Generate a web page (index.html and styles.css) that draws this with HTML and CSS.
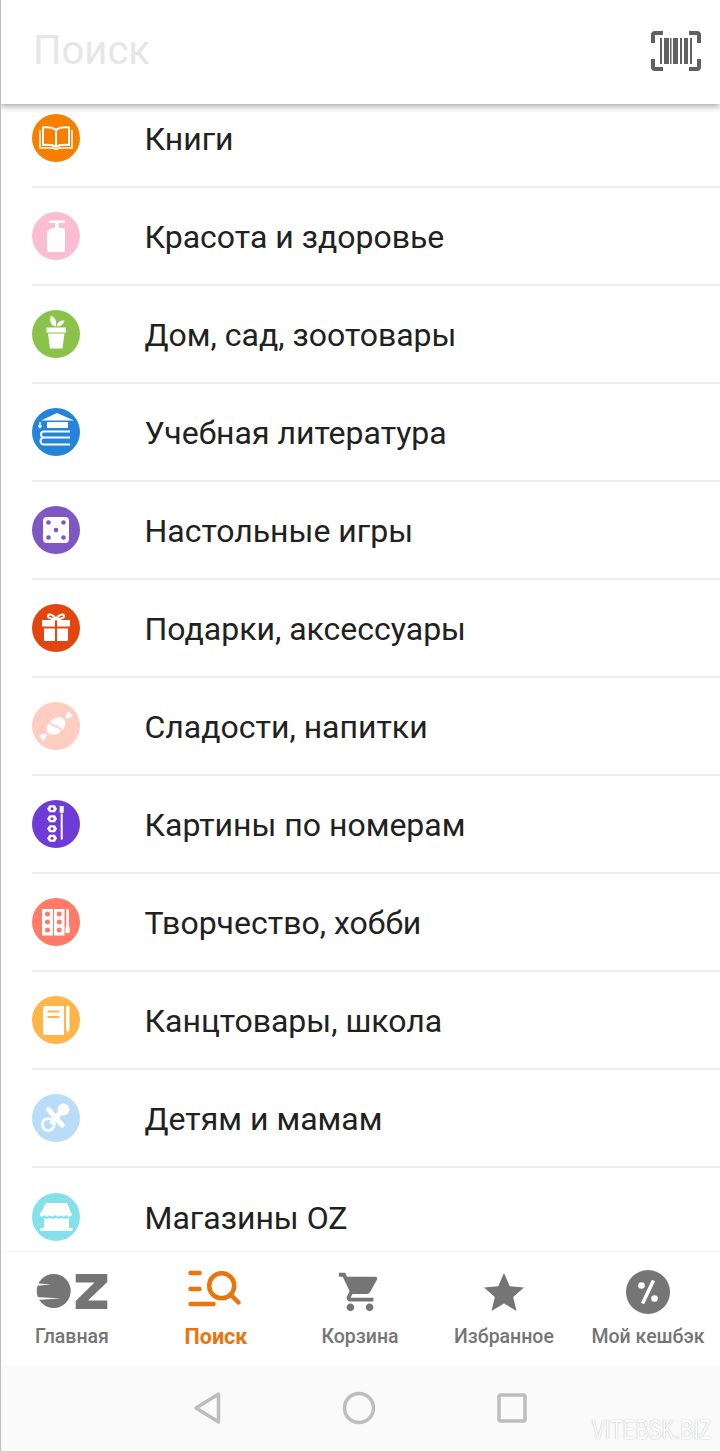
FILE: index.html
```html
<!DOCTYPE html>
<html lang="ru">
<head>
<meta charset="utf-8">
<title>Поиск</title>
<link rel="stylesheet" href="styles.css">
</head>
<body>
<div class="page">
  <header class="search">
    <span class="placeholder">Поиск</span>
    <svg class="barcode" viewBox="0 0 50 40" width="50" height="40">
      <path class="corner" d="M12 2H4a2 2 0 0 0-2 2v8M38 2h8a2 2 0 0 1 2 2v8M12 38H4a2 2 0 0 1-2-2v-8M38 38h8a2 2 0 0 0 2-2v-8"/>
      <g class="bars">
        <rect x="9" y="7" width="2" height="26"/><rect x="13" y="7" width="5" height="26"/><rect x="19" y="7" width="1.500" height="26"/><rect x="22" y="7" width="5" height="26"/><rect x="29" y="7" width="2" height="26"/><rect x="33" y="7" width="4" height="26"/><rect x="39" y="7" width="2" height="26"/>
      </g>
    </svg>
  </header>

  <main class="list">
    <ul class="rows">
      <li class="row">
        <svg class="ico c-book" viewBox="0 0 48 48"><circle cx="24" cy="24" r="24"/>
          <path class="wo" d="M24 16c-3-2.500-8-3-13-2.500V31c5-.5 10 0 13 2 3-2 8-2.500 13-2V13.500c-5-.5-10 0-13 2.500zM24 16v17"/>
          <path class="wo thin" d="M8 16v18h13c1 1.500 5 1.500 6 0h13V16"/></svg>
        <span class="name">Книги</span>
      </li>
      <li class="row">
        <svg class="ico c-pink" viewBox="0 0 48 48"><circle cx="24" cy="24" r="24"/>
          <path class="w" d="M17 8.500h16v2.500h-6v5h3a3 3 0 0 1 3 3v19a2 2 0 0 1-2 2H17a2 2 0 0 1-2-2V22c0-3.500 3-6 8-6v-5h-6z"/></svg>
        <span class="name">Красота и здоровье</span>
      </li>
      <li class="row">
        <svg class="ico c-green" viewBox="0 0 48 48"><circle cx="24" cy="24" r="24"/>
          <path class="w" d="M14.500 17.500h19.500v5H14.500zM16 23.500h16.500l-2 15h-12.500zM23.500 16.500c-4.500-1-6.500-5.500-4.500-11 4.500 2.500 6.500 6.500 4.500 11zM25 16.500c0-4 3-6.500 7.500-6-1 4-3.500 6-7.500 6z"/></svg>
        <span class="name">Дом, сад, зоотовары</span>
      </li>
      <li class="row">
        <svg class="ico c-blue" viewBox="0 0 48 48"><circle cx="24" cy="24" r="24"/>
          <path class="w" d="M25 5l17 7.500H9zM15 14h21v6H15z"/>
          <path class="wo" d="M12 23.500h26M12 23.500a3 3 0 0 0 0 6h26M12 29.500a3.500 3.500 0 0 0 0 7h26"/>
          <path class="wo thin" d="M8 14v5M6.500 17.500L8 19.500l1.500-2"/></svg>
        <span class="name">Учебная литература</span>
      </li>
      <li class="row">
        <svg class="ico c-violet" viewBox="0 0 48 48"><circle cx="24" cy="24" r="24"/>
          <rect class="w" x="11" y="11" width="26" height="26" rx="4"/>
          <g class="dots"><circle cx="16.500" cy="16.500" r="2.300"/><circle cx="31.500" cy="16.500" r="2.300"/><circle cx="24" cy="24" r="2.300"/><circle cx="16.500" cy="31.500" r="2.300"/><circle cx="31.500" cy="31.500" r="2.300"/></g></svg>
        <span class="name">Настольные игры</span>
      </li>
      <li class="row">
        <svg class="ico c-red" viewBox="0 0 48 48"><circle cx="24" cy="24" r="24"/>
          <path class="w" d="M10 16h13v6.500H10zM25 16h13v6.500H25zM12 24.500h11V37H12zM25 24.500h11V37H25z"/>
          <path class="wo" d="M24 15c-2-4-7-6-8-3.500S20 15 24 15c4 0 9-1 8-3.500S26 11 24 15z"/></svg>
        <span class="name">Подарки, аксессуары</span>
      </li>
      <li class="row">
        <svg class="ico c-candy" viewBox="0 0 48 48"><circle cx="24" cy="24" r="24"/>
          <g transform="rotate(-40 24 24)"><ellipse class="w" cx="24" cy="24" rx="10.500" ry="7.500"/>
          <path class="w" d="M36 24c1.500-2 5-3 8-3-1.500 2-1.500 4 0 6-3 0-6.500-1-8-3zM12 24c-1.500 2-5 3-8 3 1.500-2 1.500-4 0-6 3 0 6.500 1 8 3z"/>
          <path class="po" d="M21.500 16c-2 4 5.500 10 4 16"/></g></svg>
        <span class="name">Сладости, напитки</span>
      </li>
      <li class="row">
        <svg class="ico c-paint" viewBox="0 0 48 48"><circle cx="24" cy="24" r="24"/>
          <path class="w" d="M27.700 6h4v6.700h-4zM28.700 13.500h2v26h-2z"/>
          <g class="rings">
            <path d="M15 8.700l2.500-3.500h5.500l2 3.500-2 3.500h-5.500z"/><path d="M15 18.700l2.500-3.500h5.500l2 3.500-2 3.500h-5.500z"/><path d="M15 28.700l2.500-3.500h5.500l2 3.500-2 3.500h-5.500z"/><path d="M15 38.300l2.500-3.500h5.500l2 3.500-2 3.500h-5.500z"/>
          </g>
          <g class="ring-holes"><circle cx="20" cy="8.700" r="1.500"/><circle cx="20" cy="18.700" r="1.500"/><circle cx="20" cy="28.700" r="1.500"/><circle cx="20" cy="38.300" r="1.500"/></g></svg>
        <span class="name">Картины по номерам</span>
      </li>
      <li class="row">
        <svg class="ico c-coral" viewBox="0 0 48 48"><circle cx="24" cy="24" r="24"/>
          <path class="w" d="M10 11h11v26.500H10zM22 11h10.500v26.500H22zM34.300 11h2.600v16l.8 3v5h-1.900l-.2 2-.2-2h-1.900v-5l.8-3z"/>
          <g class="holes"><circle cx="15.500" cy="16" r="2.500"/><circle cx="15.500" cy="24" r="2.500"/><circle cx="15.500" cy="32" r="2.500"/><circle cx="27.200" cy="16" r="2.500"/><circle cx="27.200" cy="24" r="2.500"/><circle cx="27.200" cy="32" r="2.500"/></g></svg>
        <span class="name">Творчество, хобби</span>
      </li>
      <li class="row">
        <svg class="ico c-note" viewBox="0 0 48 48"><circle cx="24" cy="24" r="24"/>
          <path class="w" d="M13 10h19v29H13a2 2 0 0 1-2-2V12a2 2 0 0 1 2-2zM34 10h3.500v23l-1.700 4-1.800-4z"/>
          <path class="oo" d="M15.500 15.500h12M15.500 21h12"/></svg>
        <span class="name">Канцтовары, школа</span>
      </li>
      <li class="row">
        <svg class="ico c-baby" viewBox="0 0 48 48"><circle cx="24" cy="24" r="24"/>
          <circle class="ring" cx="16.300" cy="30.600" r="6"/>
          <path class="wo fat" d="M16.500 15.500l13.500 15.500"/>
          <path class="wo fat" d="M20 28l9-10"/>
          <circle class="w" cx="31.500" cy="15.500" r="6"/></svg>
        <span class="name">Детям и мамам</span>
      </li>
      <li class="row">
        <svg class="ico c-shop" viewBox="0 0 48 48"><circle cx="24" cy="24" r="24"/>
          <path class="w" d="M14 10h21l5 12c-2 2-4 2-5.500 0-2 2-4 2-5.500 0-2 2-4 2-5.500 0-2 2-4 2-5.500 0-2 2-3.500 2-5.500 0-2 2-3.500 2-5 0z"/>
          <path class="w" d="M12 25c2 1 4 1 6 0 2 1 4 1 6 0 2 1 4 1 6 0 2 1 4 1 7 0v10h3.500v3H8.500v-3H12z"/></svg>
        <span class="name">Магазины OZ</span>
      </li>
    </ul>
  </main>

  <nav class="tabs">
    <a class="tab">
      <span class="tab-icon">
        <svg class="oz" viewBox="0 0 72 38" width="72" height="38">
          <circle cx="17.700" cy="18" r="17"/>
          <path d="M39.700 1H71.300V9L52 27.500H71.300V36H39.700V28L58.500 9.500H39.700z"/>
          <path class="cut" d="M0 10.300L15 11.500L0 12.800zM0 24L25 25.500L0 27z"/>
        </svg>
      </span>
      <span class="tab-label">Главная</span>
    </a>
    <a class="tab active">
      <span class="tab-icon">
        <svg viewBox="0 0 58 44" width="58" height="44">
          <path class="s" d="M3.500 3h9M3.500 19h9M3.500 34h23"/>
          <circle class="s" cx="34.700" cy="15.700" r="12.500"/>
          <path class="s" d="M43.500 24.500l8 8"/>
        </svg>
      </span>
      <span class="tab-label">Поиск</span>
    </a>
    <a class="tab">
      <span class="tab-icon">
        <svg viewBox="0 0 24 24" width="46" height="46"><path d="M7 18c-1.100 0-1.990.9-1.990 2S5.900 22 7 22s2-.9 2-2-.9-2-2-2zM1 2v2h2l3.600 7.590-1.350 2.450c-.16.280-.25.610-.25.960 0 1.100.9 2 2 2h12v-2H7.420c-.14 0-.25-.11-.25-.25l.03-.12.9-1.630h7.450c.75 0 1.410-.41 1.750-1.030l3.580-6.490c.08-.14.120-.31.120-.48 0-.55-.45-1-1-1H5.210l-.94-2H1zm16 16c-1.100 0-1.990.9-1.990 2s.89 2 1.990 2 2-.9 2-2-.9-2-2-2z"/></svg>
      </span>
      <span class="tab-label">Корзина</span>
    </a>
    <a class="tab">
      <span class="tab-icon">
        <svg viewBox="0 0 40 40" width="40" height="40"><path d="M20 1l5.800 13.200 14.200 1.300-10.800 9.400 3.300 14.100L20 31.500 7.500 39l3.300-14.100L0 15.500l14.200-1.300z"/></svg>
      </span>
      <span class="tab-label">Избранное</span>
    </a>
    <a class="tab">
      <span class="tab-icon">
        <svg viewBox="0 0 44 44" width="44" height="44"><circle cx="22" cy="22" r="22"/>
          <circle class="pct" cx="15.500" cy="15.500" r="3.300"/><circle class="pct" cx="28.500" cy="28.500" r="3.300"/>
          <path class="pct-line" d="M27.500 10.500L16.500 33.500"/></svg>
      </span>
      <span class="tab-label">Мой кешбэк</span>
    </a>
  </nav>

  <footer class="sysbar">
    <svg class="sys-ico" viewBox="0 0 28 34" width="28" height="34"><path d="M25.500 3L3 17l22.500 14z"/></svg>
    <svg class="sys-ico" viewBox="0 0 34 34" width="34" height="34"><circle cx="17" cy="17" r="14.500"/></svg>
    <svg class="sys-ico" viewBox="0 0 30 30" width="30" height="30"><rect x="2" y="2" width="26" height="26" rx="2"/></svg>
    <span class="watermark">VITEBSK.BIZ</span>
  </footer>
</div>
</body>
</html>
```
FILE: styles.css
```css
* { box-sizing: border-box; }
html, body { margin: 0; padding: 0; }
body { background: #fff; font-family: Roboto, "Noto Sans", sans-serif; }

.page {
  position: relative;
  width: 720px;
  height: 1451px;
  display: flex;
  flex-direction: column;
  overflow: hidden;
}
.page::before {
  content: "";
  position: absolute;
  left: 0; top: 0; bottom: 0;
  width: 1px;
  background: #bdbdbd;
  z-index: 5;
}

.search {
  position: relative;
  z-index: 2;
  flex: 0 0 104px;
  display: flex;
  align-items: center;
  justify-content: space-between;
  padding: 0 19px 3px 33px;
  background: #fff;
  box-shadow: 0 2px 7px rgba(0, 0, 0, .38);
}
.placeholder { font-size: 40px; color: #e6e6e6; line-height: 44px; }
.barcode { display: block; margin-top: 1px; }
.corner { fill: none; stroke: #616161; stroke-width: 4; }
.bars { fill: #616161; }

.list { flex: 1 1 auto; min-height: 0; overflow: hidden; }
.rows { list-style: none; margin: -14px 0 0; padding: 0; }
.row {
  height: 98px;
  margin-left: 32px;
  display: flex;
  align-items: center;
  gap: 64.500px;
  border-bottom: 2px solid #eeeeee;
}
.row:last-child { border-bottom: 0; }
.name { font-size: 32px; color: #212121; line-height: 40px; padding-top: 2px; }

.ico { flex: 0 0 48px; width: 48px; height: 48px; display: block; }
.w { fill: #fff; }
.wo { fill: none; stroke: #fff; stroke-width: 2; }
.wo.thin { stroke-width: 1.500; }
.wo.fat { stroke-width: 5; stroke-linecap: round; }
.ring { fill: none; stroke: #fff; stroke-width: 2.800; }
.po { fill: none; stroke: #ffcdc2; stroke-width: 1.800; }
.oo { fill: none; stroke: #ffb54a; stroke-width: 2; }

.c-book > circle { fill: #f77f00; }
.c-pink > circle { fill: #fbbdd2; }
.c-green > circle { fill: #8bc34a; }
.c-blue > circle { fill: #2484d9; }
.c-violet > circle { fill: #7e57c2; }
.c-red > circle { fill: #e2450f; }
.c-candy > circle { fill: #ffcdc2; }
.c-paint > circle { fill: #6f3bd6; }
.c-coral > circle { fill: #ff7b67; }
.c-note > circle { fill: #ffb54a; }
.c-baby > circle.w { fill: #fff; }
.c-baby > circle:first-of-type { fill: #b9dcf9; }
.c-shop > circle { fill: #85e0ea; }
.dots circle { fill: #7e57c2; }
.rings path { fill: #fff; }
.ring-holes circle { fill: #6f3bd6; }
.holes circle { fill: #ff7b67; }

.tabs {
  flex: 0 0 114px;
  display: grid;
  grid-template-columns: repeat(5, 144px);
  background: #fff;
  border-top: 1px solid #f5f5f5;
  padding-top: 18px;
}
.tab {
  display: flex;
  flex-direction: column;
  align-items: center;
  color: #757575;
}
.tab-icon {
  height: 44px;
  display: flex;
  align-items: center;
  justify-content: center;
}
.tab-icon svg { display: block; fill: #757575; }
.tab-icon .cut { fill: #fff; }
.tab-label { margin-top: 11px; font-size: 19.500px; line-height: 24px; font-weight: 500; white-space: nowrap; }
.active { color: #e8760c; }
.active .tab-label { font-weight: 700; font-size: 21.500px; }
.active svg { fill: none; }
.s { fill: none; stroke: #e8760c; stroke-width: 4.500; stroke-linecap: round; }
.tab-icon .pct { fill: #fff; }
.pct-line { fill: none; stroke: #fff; stroke-width: 3.500; }

.sysbar {
  position: relative;
  flex: 0 0 86px;
  display: flex;
  align-items: center;
  justify-content: center;
  gap: 121px;
  background: #fafafa;
}
.sys-ico { display: block; fill: none; stroke: #bdbdbd; stroke-width: 3.500; stroke-linejoin: round; }
.watermark {
  position: absolute;
  right: 9px;
  top: 50px;
  font-family: "Liberation Sans", sans-serif;
  font-size: 28px;
  line-height: 30px;
  letter-spacing: .5px;
  color: #fff;
  text-shadow: 0 0 1.500px #9e9e9e;
  transform: scaleX(.68);
  transform-origin: right center;
}
```
